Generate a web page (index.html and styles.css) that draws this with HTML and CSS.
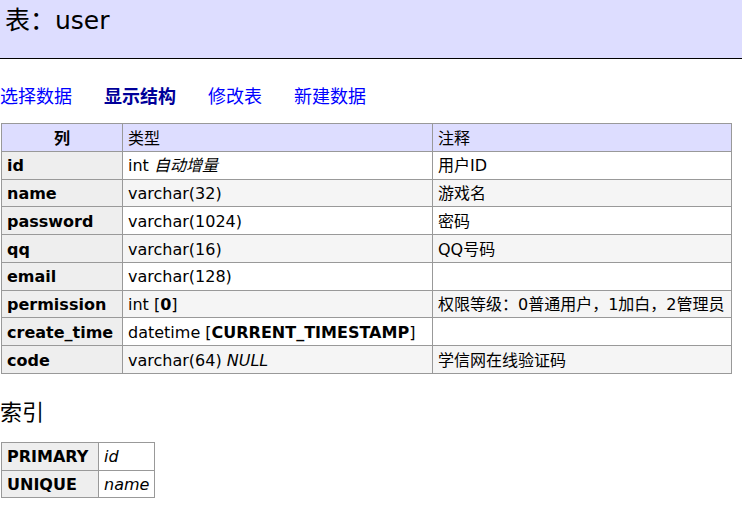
FILE: index.html
```html
<!DOCTYPE html>
<html lang="zh-CN">
<head>
<meta charset="utf-8">
<title>表：user</title>
<link rel="stylesheet" href="styles.css">
</head>
<body>
<h2 class="title">表：user</h2>
<p class="links">
  <a href="#" class="link">选择数据</a>
  <a href="#" class="link active">显示结构</a>
  <a href="#" class="link">修改表</a>
  <a href="#" class="link">新建数据</a>
</p>
<table class="grid fields">
  <colgroup><col class="c1"><col class="c2"><col class="c3"></colgroup>
  <thead>
    <tr><th class="hcenter">列</th><td>类型</td><td>注释</td></tr>
  </thead>
  <tbody>
    <tr><th>id</th><td>int <i>自动增量</i></td><td>用户ID</td></tr>
    <tr class="odd"><th>name</th><td>varchar(32)</td><td>游戏名</td></tr>
    <tr><th>password</th><td>varchar(1024)</td><td>密码</td></tr>
    <tr class="odd"><th>qq</th><td>varchar(16)</td><td>QQ号码</td></tr>
    <tr><th>email</th><td>varchar(128)</td><td></td></tr>
    <tr class="odd"><th>permission</th><td>int [<b>0</b>]</td><td>权限等级：0普通用户，1加白，2管理员</td></tr>
    <tr><th>create_time</th><td>datetime [<b>CURRENT_TIMESTAMP</b>]</td><td></td></tr>
    <tr class="odd"><th>code</th><td>varchar(64) <i>NULL</i></td><td>学信网在线验证码</td></tr>
  </tbody>
</table>
<h3 class="subtitle">索引</h3>
<table class="grid indexes">
  <colgroup><col class="i1"><col class="i2"></colgroup>
  <tbody>
    <tr><th>PRIMARY</th><td><i>id</i></td></tr>
    <tr><th>UNIQUE</th><td><i>name</i></td></tr>
  </tbody>
</table>
</body>
</html>
```
FILE: styles.css
```css
* { box-sizing: border-box; }

body {
  margin: 0;
  font-family: "DejaVu Sans", "Noto Sans CJK SC", sans-serif;
  font-size: 16px;
  color: #000;
  background: #fff;
}

.title {
  margin: 0;
  padding: 6px 5px 22px;
  height: 59px;
  font-size: 25px;
  line-height: 30px;
  font-weight: normal;
  background: #ddf;
  border-bottom: 1px solid #000;
}

.links {
  display: flex;
  gap: 32px;
  margin: 26px 0 14px;
  font-size: 18px;
  line-height: 24px;
}

.link { color: #00f; text-decoration: none; }
.link.active { color: #009; font-weight: bold; }

.grid {
  margin-left: 1px;
  border-collapse: separate;
  border-spacing: 0;
  table-layout: fixed;
  border-left: 1px solid #999;
  border-top: 1px solid #999;
}

.grid th,
.grid td {
  border-right: 1px solid #999;
  border-bottom: 1px solid #999;
  padding: 4.5px 5px 1.5px;
  line-height: 20.75px;
  white-space: nowrap;
  text-align: left;
  vertical-align: top;
}

.grid th { background: #eee; font-weight: bold; }
.grid td { background: #fff; }
.grid .odd td { background: #f5f5f5; }

.grid thead th,
.grid thead td { background: #ddf; }
.grid .hcenter { text-align: center; }

.fields { width: 731px; }
.c1 { width: 121px; }
.c2 { width: 310px; }
.c3 { width: 299px; }

.indexes { width: 154px; }
.i1 { width: 97px; }
.i2 { width: 56px; }

.subtitle {
  margin: 25px 0 15px;
  font-size: 22px;
  line-height: 28px;
  font-weight: normal;
}
```
